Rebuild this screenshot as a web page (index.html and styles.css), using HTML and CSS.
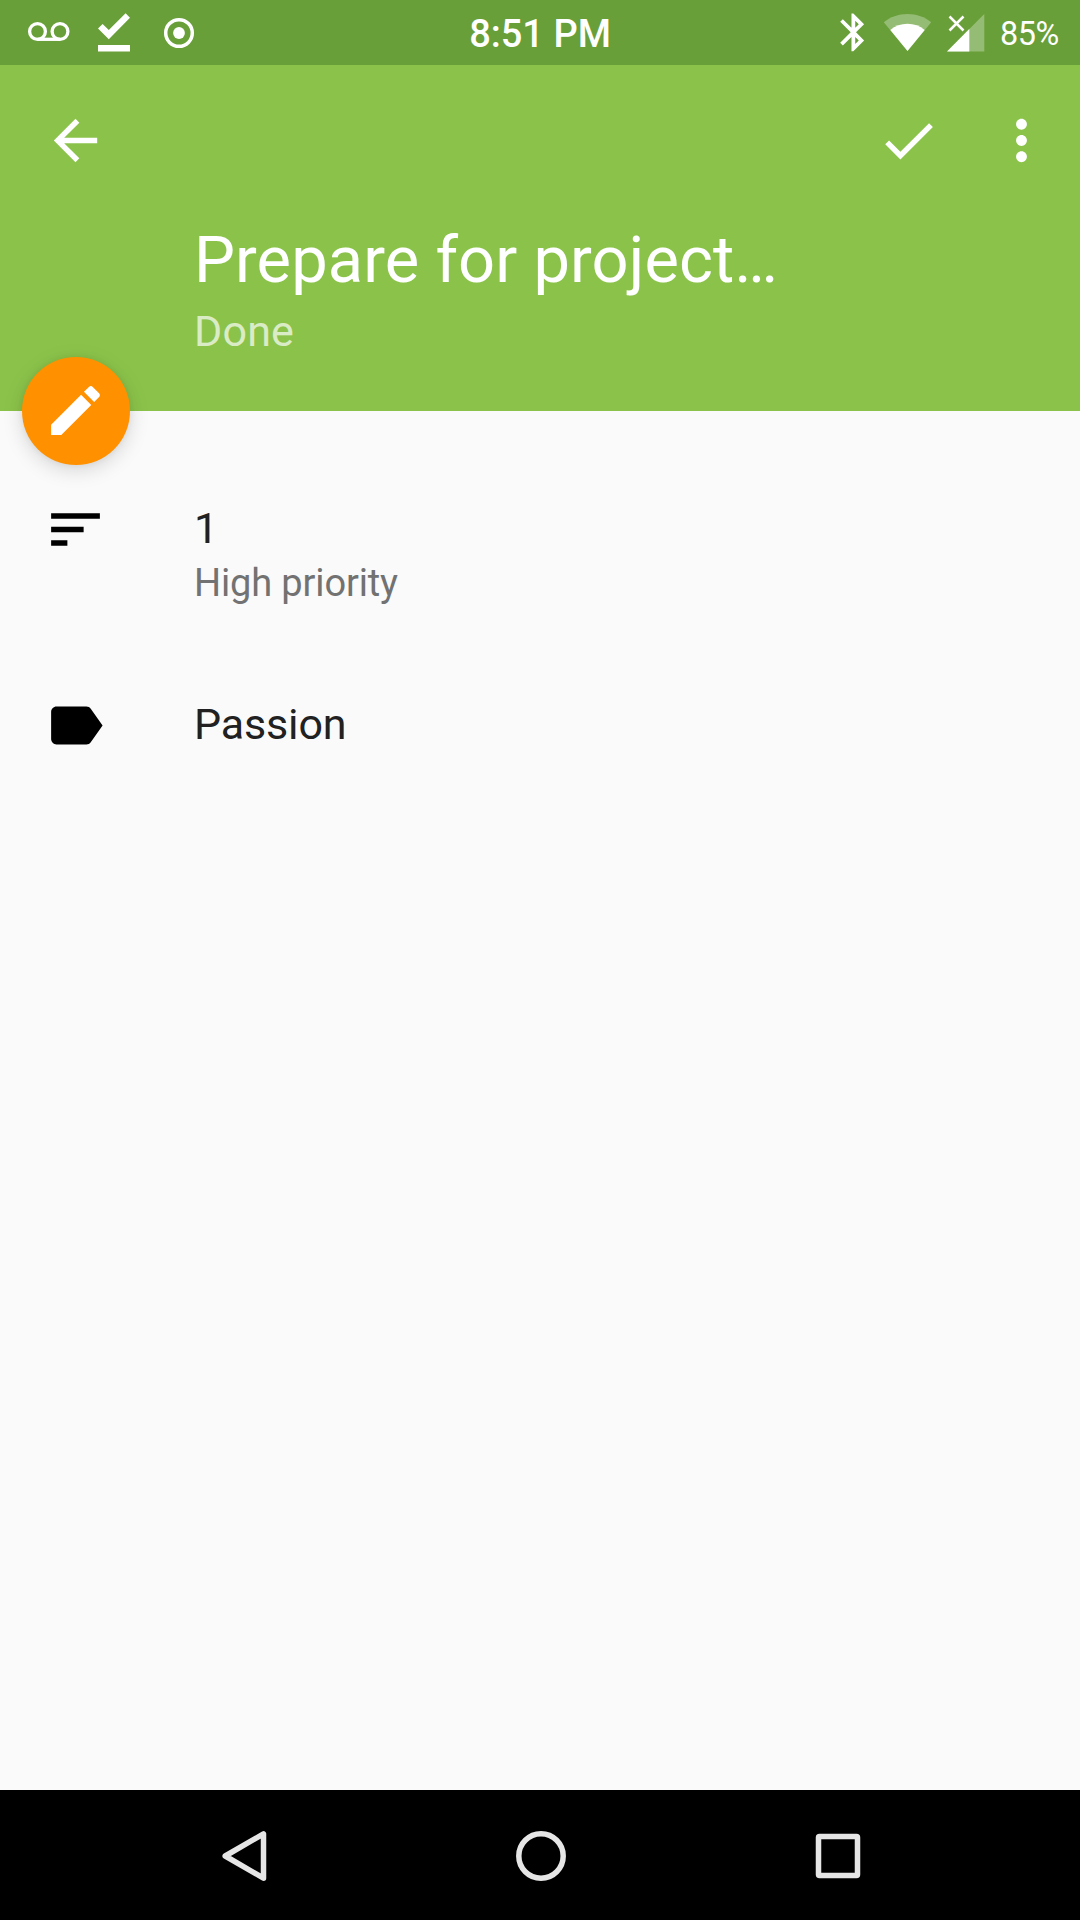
FILE: index.html
```html
<!DOCTYPE html>
<html lang="en">
<head>
<meta charset="utf-8">
<title>Task details</title>
<link rel="stylesheet" href="styles.css">
</head>
<body>
<div class="screen">
  <div class="status-bar">
    <svg class="status-left" viewBox="0 0 220 65">
      <g fill="none" stroke="#fff" stroke-width="3.3">
        <circle cx="37.5" cy="31.5" r="7.9"/>
        <circle cx="60" cy="31.5" r="7.9"/>
        <path d="M37.5 39.3H60"/>
        <circle cx="179" cy="33" r="13.3" stroke-width="3.5"/>
      </g>
      <circle cx="179" cy="33" r="5.9" fill="#fff"/>
      <path fill="#fff" d="M98 28.500l4.600-4.600 6.200 6.200 16.800-16.800 4.400 4.400-21.200 21.500zM98 45h32v6.500H98z"/>
    </svg>
    <span class="clock">8:51 PM</span>
    <div class="status-right">
      <svg class="status-icons" viewBox="830 0 160 65">
        <path fill="#fff" transform="translate(830.8 9.8) scale(1.88)" d="M17.71 7.71L12 2h-1v7.59L6.41 5 5 6.41 10.59 12 5 17.59 6.41 19 11 14.41V22h1l5.71-5.71-4.3-4.29 4.3-4.29zM13 5.83l1.88 1.88L13 9.59V5.83zm1.88 10.46L13 18.17v-3.76l1.88 1.88z"/>
        <path fill="#fff" fill-opacity=".3" d="M907.5 51L883.8 22.3C890 17 898.500 14 907.5 14s17.500 3 23.700 8.300z"/>
        <path fill="#fff" d="M907.5 51L890.300 30C895 26 901 23.800 907.5 23.800s12.500 2.200 17.200 6.200z"/>
        <path fill="#fff" fill-opacity=".3" d="M984.300 14v37.500H947z"/>
        <path fill="#fff" d="M969.300 29v22.500H947z"/>
        <path fill="none" stroke="#fff" stroke-width="2.500" d="M949.500 16.500l14 14m0-14l-14 14"/>
      </svg>
      <span class="battery">85%</span>
    </div>
  </div>

  <header class="header">
    <div class="toolbar">
      <svg class="icon" viewBox="0 0 24 24"><path d="M20 11H7.830l5.590-5.590L12 4l-8 8 8 8 1.410-1.410L7.830 13H20v-2z"/></svg>
      <div class="actions">
        <svg class="icon" viewBox="0 0 24 24"><path d="M9 16.170L4.830 12l-1.420 1.410L9 19 21 7l-1.410-1.410z"/></svg>
        <svg class="icon" viewBox="0 0 24 24"><path d="M12 8c1.100 0 2-.9 2-2s-.9-2-2-2-2 .9-2 2 .9 2 2 2zm0 2c-1.100 0-2 .9-2 2s.9 2 2 2 2-.9 2-2-.9-2-2-2zm0 6c-1.100 0-2 .9-2 2s.9 2 2 2 2-.9 2-2-.9-2-2-2z"/></svg>
      </div>
    </div>
    <h1 class="title">Prepare for project…</h1>
    <p class="subtitle">Done</p>
    <div class="fab">
      <svg class="icon" viewBox="0 0 24 24"><path d="M3 17.250V21h3.750L17.810 9.940l-3.750-3.750L3 17.250zM20.710 7.040c.39-.39.39-1.020 0-1.410l-2.340-2.340c-.39-.39-1.020-.39-1.410 0l-1.830 1.830 3.750 3.750 1.830-1.830z"/></svg>
    </div>
  </header>

  <main class="content">
    <div class="row">
      <svg class="icon row-icon" viewBox="0 0 24 24"><path d="M3 18h6v-2H3v2zM3 6v2h18V6H3zm0 7h12v-2H3v2z"/></svg>
      <div>
        <div class="primary">1</div>
        <div class="secondary">High priority</div>
      </div>
    </div>
    <div class="row">
      <svg class="icon row-icon" viewBox="0 0 24 24"><path d="M17.630 5.840C17.270 5.330 16.670 5 16 5L5 5.010C3.900 5.010 3 5.900 3 7v10c0 1.100.9 1.990 2 1.990L16 19c.67 0 1.270-.33 1.630-.84L22 12l-4.370-6.160z"/></svg>
      <div class="primary">Passion</div>
    </div>
  </main>

  <nav class="nav-bar">
    <svg class="nav-icon" viewBox="0 0 66 66"><path stroke-linejoin="round" d="M52.500 10.800v44.400L14.200 33z"/></svg>
    <svg class="nav-icon" viewBox="0 0 66 66"><circle cx="33" cy="33" r="22.200"/></svg>
    <svg class="nav-icon" viewBox="0 0 66 66"><rect x="13.500" y="13.500" width="39" height="39" rx="1"/></svg>
  </nav>
</div>
</body>
</html>
```
FILE: styles.css
```css
* { box-sizing: border-box; }

body {
  margin: 0;
  font-family: Roboto, "Liberation Sans", sans-serif;
}

.screen {
  display: flex;
  flex-direction: column;
  width: 1080px;
  height: 1920px;
  overflow: hidden;
  background: #fafafa;
}

.status-bar {
  display: grid;
  grid-template-columns: 1fr auto 1fr;
  height: 65px;
  background: #689f38;
  color: #fff;
}

.status-left { width: 220px; height: 65px; }

.clock {
  font-size: 38px;
  font-weight: 500;
  line-height: 69px;
}

.status-right {
  display: flex;
  justify-content: flex-end;
  padding-right: 21px;
}

.status-icons { width: 160px; height: 65px; }

.battery {
  width: 59px;
  margin-left: 10px;
  font-size: 32.4px;
  letter-spacing: -0.5px;
  line-height: 68px;
}

.header {
  position: relative;
  height: 346px;
  padding-left: 194px;
  background: #8bc34a;
  color: #fff;
}

.toolbar {
  display: flex;
  justify-content: space-between;
  height: 157px;
  margin-left: -194px;
  padding: 43px 26px 0 43px;
}

.actions { display: flex; gap: 48px; }

.icon {
  display: block;
  width: 65px;
  height: 65px;
  fill: #fff;
}

.title {
  margin: 0;
  font-size: 65px;
  font-weight: 400;
  letter-spacing: 0.08px;
  line-height: 76px;
}

.subtitle {
  margin: 8px 0 0;
  color: rgba(255, 255, 255, 0.7);
  font-size: 43px;
  letter-spacing: 0.2px;
  line-height: 50px;
}

.fab {
  position: absolute;
  left: 22px;
  bottom: -54px;
  display: grid;
  place-items: center;
  width: 108px;
  height: 108px;
  padding: 0 1px 1px 0;
  border-radius: 50%;
  background: #ff9100;
  box-shadow: 0 5px 20px rgba(0, 0, 0, 0.15), 0 0 6px rgba(0, 0, 0, 0.06);
}

.content {
  display: flex;
  flex: 1;
  flex-direction: column;
  gap: 94px;
  padding: 92px 43px 0;
}

.row { display: flex; align-items: flex-start; gap: 86px; }

.row-icon { margin-top: -6px; fill: #000; }

.primary {
  color: #212121;
  font-size: 43px;
  letter-spacing: -0.15px;
  line-height: 50px;
}

.secondary {
  margin-top: 8px;
  color: #727272;
  font-size: 38px;
  letter-spacing: -0.14px;
  line-height: 44px;
}

.nav-bar {
  display: flex;
  align-items: center;
  justify-content: center;
  gap: 231px;
  height: 130px;
  padding: 1px 0 0 1px;
  background: #000;
}

.nav-icon {
  width: 66px;
  height: 66px;
  fill: none;
  stroke: #e6e6e6;
  stroke-width: 5.5;
}
```
